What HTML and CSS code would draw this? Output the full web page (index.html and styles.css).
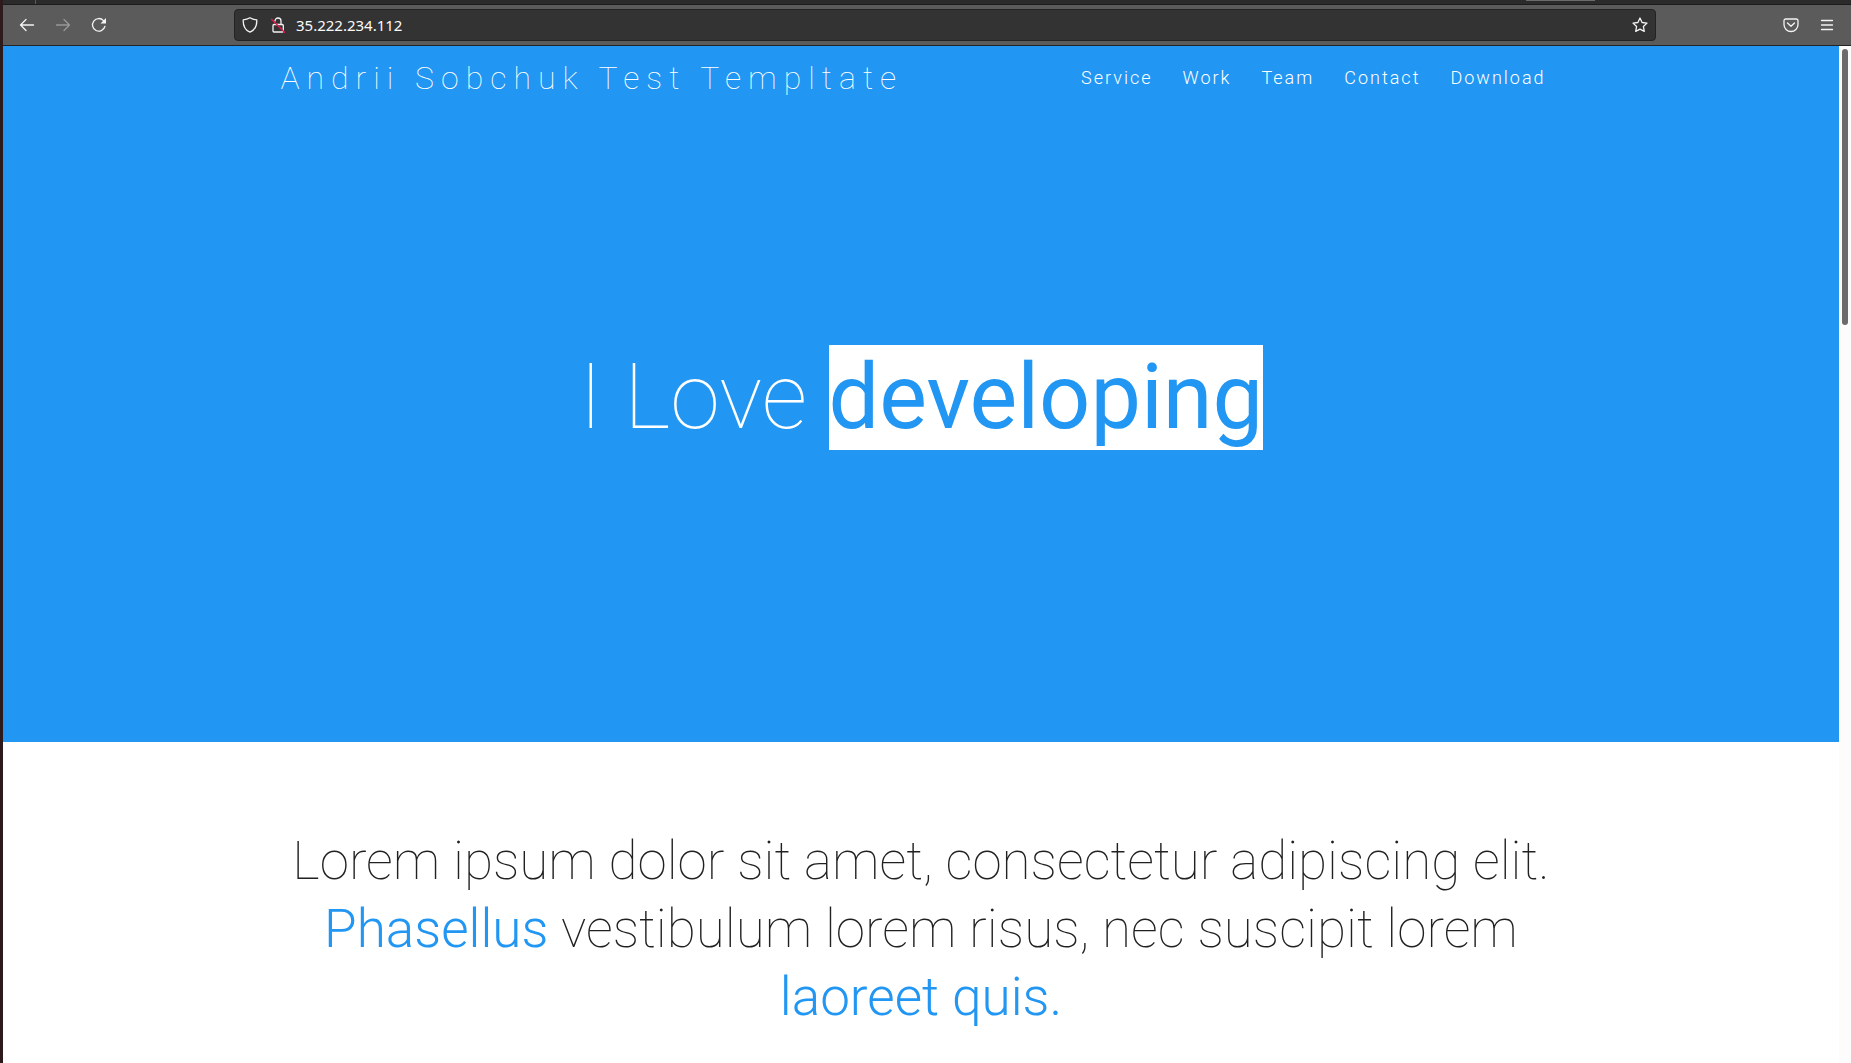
FILE: index.html
```html
<!DOCTYPE html>
<html lang="en">
<head>
<meta charset="utf-8">
<title>Andrii Sobchuk Test Templtate</title>
<link rel="stylesheet" href="styles.css">
</head>
<body>
<div class="browser">
  <div class="tabs"><span class="tab-divider"></span><span class="tab-indicator"></span></div>
  <div class="toolbar">
    <div class="history">
      <button class="tool" aria-label="Back"><svg viewBox="0 0 16 16"><path d="M14.500 8H1.500M7 2.500L1.500 8 7 13.500"/></svg></button>
      <button class="tool" aria-label="Forward" disabled><svg viewBox="0 0 16 16"><path d="M1.500 8h13M9 2.500L14.500 8 9 13.500"/></svg></button>
      <button class="tool" aria-label="Reload"><svg viewBox="0 0 16 16"><path d="M13.900 9.500A6.300 6.300 0 1 1 12.500 3.600L14 5"/><path class="solid" d="M15 1v5.500H9.500z"/></svg></button>
    </div>
    <div class="address">
      <div class="status">
        <svg class="icon" viewBox="0 0 16 16"><path d="M8 .8c2 1.200 4.200 1.900 6.800 2.100C15 9 13 13 8 15.200 3 13 1 9 1.200 2.900 3.800 2.700 6 2 8 .8z"/></svg>
        <svg class="icon" viewBox="0 0 16 16"><path d="M4.500 7.500h7.800a1 1 0 0 1 1 1v5.500a1 1 0 0 1-1 1H4a1 1 0 0 1-1-1V8.500a1 1 0 0 1 1-1M5 4a3 3 0 0 1 6 0v3.500"/><path class="slash" d="M1.500 2.200l13 13"/></svg>
      </div>
      <input class="url" type="text" value="35.222.234.112" aria-label="Address">
      <button class="tool" aria-label="Bookmark"><svg viewBox="0 0 16 16"><path d="M8 1l2.100 4.500 4.900.6-3.600 3.400.9 4.900L8 12.100l-4.300 2.300.9-4.900L1 6.100l4.900-.6z"/></svg></button>
    </div>
    <div class="extras">
      <button class="tool" aria-label="Pocket"><svg viewBox="0 0 16 16"><path d="M2.700 2h10.600A1.700 1.700 0 0 1 15 3.700v3.800a7 7 0 0 1-14 0V3.700A1.700 1.700 0 0 1 2.700 2zM4.500 6L8 9.300 11.500 6"/></svg></button>
      <button class="tool" aria-label="Menu"><svg viewBox="0 0 16 16"><path d="M2.500 3.500h11M2.500 8h11M2.500 12.500h11"/></svg></button>
    </div>
  </div>
  <div class="viewport">
    <div class="page">
      <header class="hero">
        <nav class="nav container">
          <a class="brand" href="#">Andrii Sobchuk Test Templtate</a>
          <div class="links">
            <a href="#service">Service</a>
            <a href="#work">Work</a>
            <a href="#team">Team</a>
            <a href="#contact">Contact</a>
            <a href="#download">Download</a>
          </div>
        </nav>
        <h1 class="headline">I Love <span class="highlight">developing</span></h1>
      </header>
      <section class="intro container">
        <h2 class="lead">Lorem ipsum dolor sit amet, consectetur adipiscing elit. <span class="accent">Phasellus</span> vestibulum lorem risus, nec suscipit lorem <span class="accent">laoreet quis.</span></h2>
      </section>
    </div>
    <div class="scrollbar"><div class="thumb"></div></div>
  </div>
</div>
</body>
</html>
```
FILE: styles.css
```css
* { box-sizing: border-box; }

body {
  margin: 0;
  background: #fff;
  font-family: Roboto, "Liberation Sans", sans-serif;
}

.browser {
  display: flex;
  flex-direction: column;
  height: 100vh;
  overflow: hidden;
  border-left: 3px solid #2d1a1c;
}

.tabs {
  display: flex;
  justify-content: space-between;
  flex: none;
  height: 5px;
  padding: 0 256px 0 32px;
  background: #2b2b2b;
  border-bottom: 1px solid #1c1c1c;
}
.tab-divider { width: 1px; height: 4px; background: #5b5b5b; }
.tab-indicator { width: 69px; height: 1px; background: #6b6b6b; }

.toolbar {
  display: flex;
  align-items: center;
  flex: none;
  height: 41px;
  padding: 0 12px 1px 12px;
  background: #5b5b5b;
  border-bottom: 1px solid #242424;
}
.history { display: flex; gap: 12px; width: 219px; }
.extras { display: flex; justify-content: flex-end; gap: 12px; width: 183px; }

.tool {
  display: flex;
  align-items: center;
  justify-content: center;
  width: 24px;
  height: 24px;
  padding: 0;
  border: 0;
  background: none;
}
.tool:disabled { opacity: 0.4; }
.tool svg, .icon {
  width: 16px;
  height: 16px;
  flex: none;
  fill: none;
  stroke: #f4f4f4;
  stroke-width: 1.3;
  stroke-linecap: round;
  stroke-linejoin: round;
}
.tool .solid { fill: #f4f4f4; stroke: none; }
.icon .slash { stroke: #e8174b; }

.address {
  display: flex;
  align-items: center;
  flex: 1;
  gap: 10px;
  height: 32px;
  padding: 0 3px 0 7px;
  background: #333;
  border: 1px solid #232323;
  border-radius: 4px;
}
.status { display: flex; gap: 12px; }
.url {
  flex: 1;
  min-width: 0;
  padding: 0;
  border: 0;
  outline: 0;
  background: none;
  color: #fbfbfb;
  font: 15px/20px "Noto Sans", sans-serif;
}

.viewport { display: flex; flex: 1; min-height: 0; }
.page { flex: 1; min-width: 0; overflow: hidden; }
.container { width: 70%; margin: 0 auto; }

.scrollbar { flex: none; width: 12px; padding: 3px; background: #fcfcfc; }
.thumb { height: 276px; border-radius: 3px; background: #6b6b6b; }

.hero {
  display: flex;
  flex-direction: column;
  height: 696px;
  background: #2196f3;
  color: #fff;
}
.nav {
  display: flex;
  justify-content: space-between;
  align-items: center;
  height: 64px;
  padding: 0 18px 0 2px;
}
.nav a { color: #fff; text-decoration: none; }
.brand { font-size: 32px; font-weight: 100; letter-spacing: 7px; }
.links { display: flex; gap: 30px; padding-bottom: 2px; font-size: 18px; font-weight: 300; letter-spacing: 2px; }

.headline {
  margin: 228px 0 0;
  font-size: 90px;
  font-weight: 100;
  line-height: 120px;
  text-align: center;
}
.highlight { background: #fff; color: #2196f3; font-weight: 400; }

.intro { padding: 85px 0; }
.lead {
  margin: 0;
  color: #212121;
  font-size: 53px;
  font-weight: 100;
  line-height: 68px;
  text-align: center;
}
.accent { color: #2196f3; font-weight: 300; }
```
